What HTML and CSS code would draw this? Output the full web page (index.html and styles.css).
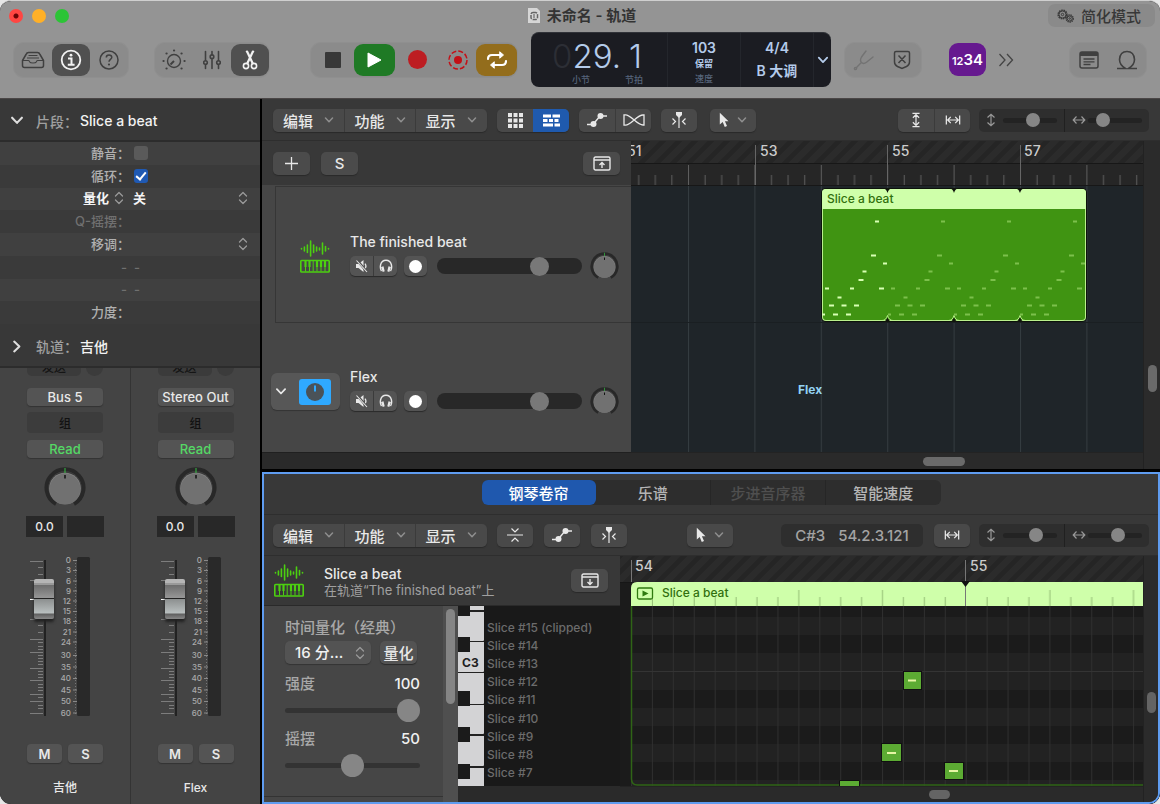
FILE: index.html
```html
<!DOCTYPE html>
<html lang="zh-CN">
<head>
<meta charset="utf-8">
<title>未命名 - 轨道</title>
<link rel="stylesheet" href="styles.css">
</head>
<body>
<svg class="defs" aria-hidden="true">
  <symbol id="chev" viewBox="0 0 10 6"><path d="M1.500 1l3.500 3.700L8.500 1" fill="none" stroke="currentColor" stroke-width="1.500" stroke-linecap="round" stroke-linejoin="round"/></symbol>
  <symbol id="updown" viewBox="0 0 10 14"><path d="M1.500 5L5 1.500 8.500 5M1.500 9L5 12.500 8.500 9" fill="none" stroke="currentColor" stroke-width="1.300" stroke-linecap="round" stroke-linejoin="round"/></symbol>
  <symbol id="auto" viewBox="0 0 22 16"><path d="M1 12.500h6L14 4h7" fill="none" stroke="currentColor" stroke-width="1.400"/><circle cx="7.500" cy="12" r="3" fill="currentColor"/><circle cx="14.500" cy="4" r="3" fill="currentColor"/></symbol>
  <symbol id="catch" viewBox="0 0 16 16"><path d="M8 3v13M1.500 6.500l3 3-3 3M14.500 6.500l-3 3 3 3" fill="none" stroke="currentColor" stroke-width="1.200"/><path d="M5 0h6v3L8 6 5 3z" fill="currentColor"/></symbol>
  <symbol id="pointer" viewBox="0 0 10 16"><path d="M.8.8v11.800l2.900-2.500 2.100 4.900 2.200-1-2.100-4.700h3.600z" fill="currentColor"/></symbol>
  <symbol id="fitw" viewBox="0 0 18 12"><path d="M1.500 1v10M16.500 1v10M3 6h12M6.500 2.500L3 6l3.500 3.500M11.500 2.500L15 6l-3.500 3.500" fill="none" stroke="currentColor" stroke-width="1.400"/></symbol>
  <symbol id="fith" viewBox="0 0 12 18"><path d="M2 1.500h8M2 16.500h8M6 3v12M2.500 6.500L6 3l3.500 3.500M2.500 11.500L6 15l3.500-3.500" fill="none" stroke="currentColor" stroke-width="1.400"/></symbol>
  <symbol id="vert" viewBox="0 0 10 14"><path d="M5 1.500v11M1.500 4.500L5 1.200l3.500 3.300M1.500 9.500L5 12.800l3.500-3.300" fill="none" stroke="currentColor" stroke-width="1.200"/></symbol>
  <symbol id="horiz" viewBox="0 0 14 10"><path d="M1.500 5h11M4.500 1.500L1.200 5l3.300 3.500M9.500 1.500L12.800 5l-3.300 3.500" fill="none" stroke="currentColor" stroke-width="1.200"/></symbol>
  <symbol id="instr" viewBox="0 0 30 33"><g stroke="#4cd010" stroke-width="1.600" stroke-linecap="round" fill="none"><path d="M1.500 8.500v.5M4.400 7v4M7.400 5v7.500M10.600 1v15M13.600 5v7.500M16.600 7v4M19.500 8v2M22.500 3v11M25.500 6.500v4.500M28.500 8.500v.5"/><rect x=".8" y="20.500" width="28.400" height="11.500" rx=".8"/><path d="M5.500 21v10M9.500 21v10M13.200 21v10M17 21v10M21 21v10M25 21v10" stroke-width="1"/><path d="M5.500 21v6M9.500 21v6M17 21v6M21 21v6M25 21v6" stroke-width="2.200" stroke-linecap="butt"/></g></symbol>
  <symbol id="muted" viewBox="0 0 14 14"><path d="M1 5v4h2.500L8.500 13V1L3.500 5z" fill="currentColor"/><path d="M10 4.500a4 4 0 010 5" fill="none" stroke="currentColor" stroke-width="1.200"/><path d="M2 1l10 12" stroke="#505050" stroke-width="2.500"/><path d="M1.500 1.500l10.500 11.500" stroke="currentColor" stroke-width="1.100"/></symbol>
  <symbol id="phones" viewBox="0 0 14 14"><path d="M2.500 12C.5 9 .8 1.200 7 1.200s6.500 7.800 4.500 10.800" fill="none" stroke="currentColor" stroke-width="1.400"/><path d="M2 8l2.500-.8 1.200 5-2 .8zM12 8l-2.500-.8-1.200 5 2 .8z" fill="currentColor"/></symbol>
  <symbol id="knob" viewBox="0 0 42 42"><path d="M12 37A18.500 18.500 0 1 1 30 37" fill="none" stroke="#282828" stroke-width="4"/><circle cx="21" cy="21" r="16.500" fill="#3a3a3a"/><circle cx="21" cy="21.500" r="15.800" fill="#858585"/><circle cx="21" cy="22" r="15.400" fill="#717171"/><path d="M21 1v5" stroke="#35c042"/><path d="M21 8v3.500" stroke="#111" stroke-width="1.500"/></symbol>
  <symbol id="loopnotes" viewBox="0 0 66 132" overflow="visible"><path d="M53 33.500h4M49 67.500h5M61 75.500h4M40.500 83.500h4M36.500 92h5M3 100.500h4M28 100.500h4M57 100.500h5M15.500 109.500h4M7 117.500h5M19.500 117.500h5M32 117.500h5M0 126.500h3M11 126.500h5M24 126.500h5" stroke="currentColor" stroke-width="2"/></symbol>
</svg>

<div class="window">
  <header class="top">
    <div class="titlebar">
      <div class="lights"><button class="light red" aria-label="关闭"></button><button class="light yellow" aria-label="最小化"></button><button class="light green" aria-label="缩放"></button></div>
      <h1 class="title"><svg width="12" height="15" viewBox="0 0 12 15"><path d="M0 0h9l3 3v12H0z" fill="#d6d6d6"/><rect x="3" y="4.500" width="6.500" height="7" rx="2" fill="none" stroke="#666" stroke-width="1.500" stroke-dasharray="4 1"/><path d="M6 6v4" stroke="#555"/></svg>未命名 - 轨道</h1>
      <button class="simple"><svg width="17" height="14" viewBox="0 0 17 14" fill="none" stroke="#3b3b3b"><circle cx="5.500" cy="5.500" r="4.300" stroke-width="1.600" stroke-dasharray="1.600 .7"/><circle cx="5.500" cy="5.500" r="3.500"/><circle cx="5.500" cy="5.500" r="1.200"/><circle cx="12.700" cy="9.500" r="3.500" stroke-width="1.500" stroke-dasharray="1.400 .7"/><circle cx="12.700" cy="9.500" r="2.500"/><circle cx="12.700" cy="9.500" r=".8"/></svg>简化模式</button>
    </div>
    <div class="maintools">
      <div class="group">
        <button aria-label="资源库"><svg width="24" height="18" viewBox="0 0 24 18" fill="none" stroke="currentColor" stroke-width="1.500" stroke-linejoin="round"><path d="M1.500 9.500L5 3.500Q5.800 1.500 7.500 1.500h9q1.700 0 2.500 2l3.500 6v5q0 2-2 2h-17q-2 0-2-2z"/><path d="M1.500 9.500h6q.8 0 1 1.200.8 1.300 3.500 1.300t3.500-1.300q.2-1.200 1-1.200h6M7.500 4.500h9M6 7h12" stroke-width="1.200"/></svg></button>
        <button class="on" aria-label="检查器"><svg width="22" height="22" viewBox="0 0 22 22" fill="none" stroke="currentColor" stroke-width="1.800"><circle cx="11" cy="11" r="9.300"/><path d="M8 9.500h3.500v6M7.800 15.700h6.800" stroke-width="2"/><circle cx="11" cy="6.200" r="1.400" fill="currentColor" stroke="none"/></svg></button>
        <button aria-label="快速帮助"><svg width="22" height="22" viewBox="0 0 22 22" fill="none" stroke="currentColor" stroke-width="1.500"><circle cx="11" cy="11" r="9"/><path d="M8.300 8.500Q8.300 6 11 6t2.800 2.300c0 2-2.800 2.200-2.800 4.400"/><circle cx="11" cy="15.500" r="1.100" fill="currentColor" stroke="none"/></svg></button>
      </div>
      <div class="group">
        <button aria-label="智能控制"><svg width="24" height="22" viewBox="0 0 24 22" fill="none" stroke="currentColor" stroke-width="1.400"><circle cx="12" cy="12" r="6.500"/><path d="M12 12l-3.500 3.500" stroke-width="2"/><path d="M1.500 12h.1M22.500 12h.1M4.500 4.500h.1M19.500 4.500h.1M12 1.500h.1M4.500 19.500h.1M19.500 19.500h.1" stroke-width="2.200" stroke-linecap="round"/></svg></button>
        <button aria-label="混音器"><svg width="18" height="20" viewBox="0 0 18 20" fill="none" stroke="currentColor" stroke-width="1.600" stroke-linecap="round"><path d="M2.500 1.500v9M2.500 15v3.500M9 1.500v3M9 9v9.500M15.500 1.500v9M15.500 15v3.500"/><circle cx="2.500" cy="12.500" r="1.800"/><circle cx="9" cy="6.700" r="1.800"/><circle cx="15.500" cy="12.500" r="1.800"/></svg></button>
        <button class="on" aria-label="编辑器"><svg width="16" height="20" viewBox="0 0 16 20" fill="none" stroke="currentColor"><circle cx="4" cy="16" r="2.600" stroke-width="1.600"/><circle cx="12" cy="16" r="2.600" stroke-width="1.600"/><path d="M4.200 1l1 .8L11 14M11.800 1l-1 .8L5 14" stroke-width="2.200"/></svg></button>
      </div>
      <div class="group transport">
        <button class="halt" aria-label="停止"><i class="stop"></i></button>
        <button class="play" aria-label="播放"><svg width="15" height="16" viewBox="0 0 15 16"><path d="M1 1l13 7-13 7z" fill="#fff" stroke="#fff" stroke-linejoin="round"/></svg></button>
        <button class="record" aria-label="录音"><i class="rec"></i></button>
        <button class="capture" aria-label="捕捉录音"><svg width="20" height="20" viewBox="0 0 20 20"><circle cx="10" cy="10" r="9" fill="none" stroke="#c40f16" stroke-width="1.500" stroke-dasharray="5 2.070"/><circle cx="10" cy="10" r="4" fill="#c40f16"/></svg></button>
        <button class="cycle" aria-label="循环"><svg width="22" height="18" viewBox="0 0 22 18" fill="none" stroke="#fff" stroke-width="2.200" stroke-linecap="round"><path d="M2 8Q2 4 6 4h8M20 10q0 4-4 4H8"/><path d="M14 1l3.500 3L14 7zM8 11l-3.500 3L8 17z" fill="#fff" stroke-width="1" stroke-linejoin="round"/></svg></button>
      </div>
      <div class="lcd">
        <div class="lcd-pos">
          <div class="digits"><span class="ghost">0</span><span>29.</span><span class="beat">1</span></div>
          <div class="lcd-labels"><span>小节</span><span>节拍</span></div>
        </div>
        <div class="lcd-tempo"><b>103</b><em>保留</em><small>速度</small></div>
        <div class="lcd-key"><b>4/4</b><b>B 大调</b></div>
        <button class="lcd-more" aria-label="显示模式"><svg width="12" height="8"><use href="#chev"/></svg></button>
      </div>
      <div class="group tuner">
        <button class="faint" aria-label="调音器"><svg width="22" height="22" viewBox="0 0 22 22" fill="none" stroke="currentColor" stroke-width="1.400" stroke-linecap="round"><path d="M3.300 18.700L8.300 13.500M13 2L8.500 8Q6.500 11.500 8.500 13.500t5-.3L20 8"/><circle cx="2.500" cy="19.500" r="1.100"/></svg></button>
        <button aria-label="独奏安全"><svg width="18" height="20" viewBox="0 0 18 20" fill="none" stroke="currentColor" stroke-width="1.500"><path d="M3 1.500h12q1.500 0 1.500 1.500v9q0 3-3 4.500L9 18.500l-4.500-2q-3-1.500-3-4.500V3q0-1.500 1.500-1.500zM5.500 5.500l7 7.500M12.500 5.500l-7 7.500"/></svg></button>
      </div>
      <button class="count" aria-label="预备拍"><span class="sm">12</span>34</button>
      <button class="more" aria-label="更多"><svg width="16" height="14" viewBox="0 0 16 14" fill="none" stroke="#444" stroke-width="1.300"><path d="M1.500 1l5.500 6-5.500 6M9 1l5.500 6L9 13"/></svg></button>
      <div class="group right">
        <button aria-label="备忘录"><svg width="20" height="18" viewBox="0 0 20 18" fill="none" stroke="currentColor" stroke-width="1.500"><rect x="1" y="1" width="18" height="16" rx="2"/><path d="M1 3h18" stroke-width="4"/><path d="M4.500 8h11M4.500 10.800h11M4.500 13.500h7" stroke-width="1.300"/></svg></button>
        <button aria-label="循环浏览器"><svg width="22" height="20" viewBox="0 0 22 20" fill="none" stroke="currentColor" stroke-width="1.600"><path d="M1 18.500h8.500Q3.500 15 3.500 9.500 4 1.500 11 1.500t7.500 8Q18.500 15 12.500 18.500H21"/></svg></button>
      </div>
    </div>
  </header>

  <div class="workspace">
    <aside class="inspector">
      <button class="insp-head"><svg width="14" height="9"><use href="#chev"/></svg><span class="k">片段：</span><span>Slice a beat</span></button>
      <div class="params">
        <div class="prow"><label class="pk" for="mute">静音：</label><input type="checkbox" id="mute"></div>
        <div class="prow"><label class="pk" for="loop">循环：</label><input type="checkbox" id="loop" checked></div>
        <div class="prow"><label class="pk strong" for="quant">量化 <svg width="10" height="14"><use href="#updown"/></svg></label><select id="quant"><option>关</option></select><svg class="ud" width="10" height="14"><use href="#updown"/></svg></div>
        <div class="prow off"><span class="pk">Q-摇摆：</span></div>
        <div class="prow"><span class="pk">移调：</span><svg class="ud" width="10" height="14"><use href="#updown"/></svg></div>
        <div class="prow dash"><span class="pk">-</span><span>-</span></div>
        <div class="prow dash"><span class="pk">-</span><span>-</span></div>
        <div class="prow"><span class="pk">力度：</span></div>
      </div>
      <button class="insp-head closed"><svg class="side" width="14" height="9"><use href="#chev"/></svg><span class="k">轨道：</span><span>吉他</span></button>
      <div class="strips">
        <section class="strip">
          <div class="sends"><span>发送</span><i></i></div>
          <button class="slot">Bus 5</button><button class="slot grp">组</button><button class="slot read">Read</button>
          <svg class="pan" width="42" height="42"><use href="#knob"/></svg>
          <div class="vals"><output>0.0</output><output></output></div>
          <div class="fader"><svg width="72" height="160"><g id="scale">
            <path d="M16 3v156" stroke="#222" stroke-width="2"/>
            <g stroke="#7d7d7d" stroke-width="1"><path d="M1 4.500h13M1 23.500h13M1 62.500h13M1 82.500h13M1 95.500h13M1 111.500h13M1 123.500h13M1 137.500h13M1 144.500h13M1 156.500h13"/><path d="M9 10.500h5M9 17.500h5M9 68.500h5M9 75.500h5M9 85.500h5M9 89.500h5M9 92.500h5M9 98.500h5M9 101.500h5M9 104.500h5M9 107.500h5M9 114.500h5M9 117.500h5M9 120.500h5M9 127.500h5M9 130.500h5M9 133.500h5M9 140.500h5M9 148.500h5M9 151.500h5"/></g>
            <path d="M1 42.500h5" stroke="#fff"/>
            <path d="M46.500 3v154" stroke="#777" stroke-dasharray="1 2"/>
            <path d="M44 3.500h4M44 13.500h4M44 24h4M44 34h4M44 44h4M44 54.500h4M44 64.500h4M44 75h4M44 85h4M44 98.500h4M44 110h4M44 121.500h4M44 133h4M44 144.500h4M44 156h4" stroke="#888"/>
            <g class="scale-num"><text x="42" y="6">0</text><text x="42" y="16">3</text><text x="42" y="27">6</text><text x="42" y="37">9</text><text x="42" y="47">12</text><text x="42" y="57">15</text><text x="42" y="67">18</text><text x="42" y="78">21</text><text x="42" y="88">24</text><text x="42" y="101">30</text><text x="42" y="113">35</text><text x="42" y="124">40</text><text x="42" y="136">45</text><text x="42" y="147">50</text><text x="42" y="159">60</text></g>
            <rect x="48" y="0" width="13" height="159" rx="1.500" fill="#292929"/></g></svg><input type="range" aria-label="吉他音量" min="0" max="100" value="82"></div>
          <div class="ms"><button>M</button><button>S</button></div>
          <div class="name">吉他</div>
        </section>
        <section class="strip">
          <div class="sends"><span>发送</span><i></i></div>
          <button class="slot">Stereo Out</button><button class="slot grp">组</button><button class="slot read">Read</button>
          <svg class="pan" width="42" height="42"><use href="#knob"/></svg>
          <div class="vals"><output>0.0</output><output></output></div>
          <div class="fader"><svg width="72" height="160"><use href="#scale"/></svg><input type="range" aria-label="Flex音量" min="0" max="100" value="82"></div>
          <div class="ms"><button>M</button><button>S</button></div>
          <div class="name">Flex</div>
        </section>
      </div>
    </aside>

    <main class="main">
      <section class="arrange">
        <div class="bar">
          <div class="seg menus"><button>编辑<svg width="10" height="6"><use href="#chev"/></svg></button><button>功能<svg width="10" height="6"><use href="#chev"/></svg></button><button>显示<svg width="10" height="6"><use href="#chev"/></svg></button></div>
          <div class="seg"><button aria-label="实时循环网格"><svg width="15" height="15" viewBox="0 0 15 15" fill="currentColor"><path d="M0 0h4v4H0zM5.500 0h4v4h-4zM11 0h4v4h-4zM0 5.500h4v4H0zM5.500 5.500h4v4h-4zM11 5.500h4v4h-4zM0 11h4v4H0zM5.500 11h4v4h-4zM11 11h4v4h-4z"/></svg></button><button class="blue" aria-label="轨道视图"><svg width="17" height="13" viewBox="0 0 17 13" fill="none" stroke="currentColor" stroke-width="3"><path d="M0 2h8M9.500 2H17M0 6.500h4.500M6 6.500h4M11.500 6.500h4M0 11h10M11.500 11H17"/></svg></button></div>
          <div class="seg"><button aria-label="自动化"><svg width="22" height="16"><use href="#auto"/></svg></button><button aria-label="弹性"><svg width="22" height="12" viewBox="0 0 22 12" fill="none" stroke="currentColor" stroke-width="1.300"><path d="M1 .8h1.500C8 .8 14 11 20 11h1V1h-1C14 1 8 11.200 2.500 11.200H1z"/></svg></button></div>
          <div class="seg"><button aria-label="跟随"><svg width="16" height="16"><use href="#catch"/></svg></button></div>
          <div class="seg wide"><button aria-label="指针工具"><svg width="10" height="16"><use href="#pointer"/></svg><svg class="dim" width="10" height="6"><use href="#chev"/></svg></button></div>
          <div class="bar-right">
            <div class="seg"><button aria-label="适合高度"><svg width="12" height="16"><use href="#fith"/></svg></button><button aria-label="适合宽度"><svg width="16" height="12"><use href="#fitw"/></svg></button></div>
            <div class="zoom"><label><svg width="10" height="14"><use href="#vert"/></svg><input type="range" aria-label="垂直缩放" value="58"></label><label><svg width="14" height="10"><use href="#horiz"/></svg><input type="range" aria-label="水平缩放" value="20"></label></div>
          </div>
        </div>
        <div class="arr-body">
          <div class="heads">
            <div class="heads-top"><button class="btn" aria-label="添加轨道"><svg width="13" height="13" viewBox="0 0 13 13"><path d="M6.500 0v13M0 6.500h13" stroke="currentColor" stroke-width="1.300"/></svg></button><button class="btn">S</button><button class="btn end" aria-label="全局轨道"><svg width="18" height="15" viewBox="0 0 18 15" fill="none" stroke="currentColor" stroke-width="1.400"><rect x="1" y="1" width="16" height="13" rx="1.500"/><path d="M1 4h16M9 12V7M6.500 9L9 6.500 11.500 9"/></svg></button></div>
            <div class="track first">
              <div class="ticon"><svg width="30" height="33"><use href="#instr"/></svg></div>
              <div class="tinfo"><div class="tname">The finished beat</div>
                <div class="tctl"><div class="seg mini"><button aria-label="静音"><svg width="14" height="14"><use href="#muted"/></svg></button><button aria-label="独奏"><svg width="14" height="14"><use href="#phones"/></svg></button></div><div class="seg mini"><button aria-label="录音启用"><i class="dot"></i></button></div><input class="vol" type="range" aria-label="音量" value="74"><svg class="tknob" width="29" height="29"><use href="#knob"/></svg></div></div>
            </div>
            <div class="track second">
              <div class="ticon"><button class="tbox" aria-label="展开"><svg width="12" height="7"><use href="#chev"/></svg><svg width="32" height="26" viewBox="0 0 32 26"><rect width="32" height="26" rx="3" fill="#2fa9ff"/><circle cx="16" cy="13" r="9" fill="#4a5258"/><path d="M16 6.500v6" stroke="#2fa9ff" stroke-width="2"/></svg></button></div>
              <div class="tinfo"><div class="tname">Flex</div>
                <div class="tctl"><div class="seg mini"><button aria-label="静音"><svg width="14" height="14"><use href="#muted"/></svg></button><button aria-label="独奏"><svg width="14" height="14"><use href="#phones"/></svg></button></div><div class="seg mini"><button aria-label="录音启用"><i class="dot"></i></button></div><input class="vol" type="range" aria-label="音量" value="74"><svg class="tknob" width="29" height="29"><use href="#knob"/></svg></div></div>
            </div>
            <div class="heads-foot"></div>
          </div>
          <div class="timeline">
            <svg class="canvas" width="100%" height="311">
              <defs>
                <pattern id="hatch" width="16" height="16" patternUnits="userSpaceOnUse"><rect width="16" height="16" fill="#2b2b2b"/><path d="M-4 4L4-4M-4 20L20-4M12 20L20 12" stroke="#252525" stroke-width="5"/></pattern>
                <pattern id="beats" x="57" width="66.400" height="44" patternUnits="userSpaceOnUse"><path d="M.5 24v20M17.100 34v10M33.700 34v10M50.300 34v10" stroke="#5e5e5e"/></pattern>
                <pattern id="barlines" x="57" width="66.400" height="300" patternUnits="userSpaceOnUse"><path d="M.5 0v300" stroke="#343c40"/></pattern>
              </defs>
              <rect width="100%" height="311" fill="#1f2529"/>
              <rect y="44" width="100%" height="267" fill="url(#barlines)"/>
              <path d="M0 181.500h2000" stroke="#1a1f22"/>
              <rect width="100%" height="44" fill="#262626"/>
              <rect width="100%" height="22" fill="url(#hatch)"/>
              <path d="M0 22.500h2000M0 44.500h2000" stroke="#171717"/>
              <rect width="100%" height="44" fill="url(#beats)"/>
              <path d="M124.500 4v40M256.500 4v40M389.500 4v40" stroke="#666"/>
              <g class="rnum"><text x="-4" y="15">51</text><text x="129" y="15">53</text><text x="261" y="15">55</text><text x="393" y="15">57</text></g>
              <g transform="translate(190 47)">
                <rect x="0" y="0" width="266" height="134" rx="5" fill="#0c120a"/>
                <rect x="1" y="1" width="264" height="132" rx="4" fill="#b9f08c"/>
                <path d="M2 21h262v108q0 3-3 3H5q-3 0-3-3z" fill="#409412"/>
                <path d="M1 21V5q0-4 4-4h256q4 0 4 4v16z" fill="#cfffaa"/>
                <g fill="#10150c"><path d="M62 0h9q-3.500 1-4.500 5-1-4-4.500-5zM128.500 0h9q-3.500 1-4.500 5-1-4-4.500-5zM194.500 0h9q-3.500 1-4.500 5-1-4-4.500-5zM62 134h9q-3.500-1-4.500-5-1 4-4.500 5zM128.500 134h9q-3.500-1-4.500-5-1 4-4.500 5zM194.500 134h9q-3.500-1-4.500-5-1 4-4.500 5z"/></g>
                <path d="M61 132.500q4 0 5.500-5 1.500 5 5.500 5M127.500 132.500q4 0 5.500-5 1.500 5 5.500 5M193.500 132.500q4 0 5.500-5 1.500 5 5.500 5" fill="none" stroke="#b9f08c"/>
                <text class="rname" x="6" y="15">Slice a beat</text>
                <use class="n1" href="#loopnotes" x="1" width="66" height="132"/>
                <g class="n2"><use href="#loopnotes" x="67" width="66" height="132"/><use href="#loopnotes" x="133" width="66" height="132"/><use href="#loopnotes" x="199" width="66" height="132"/></g>
              </g>
              <text class="flexlabel" x="167" y="253">Flex</text>
            </svg>
            <div class="hscroll"><i class="thumb-h"></i></div>
          </div>
          <div class="vscroll"><i class="thumb-v"></i></div>
        </div>
      </section>

      <section class="editor">
        <div class="tabsrow"><div class="tabs"><button class="sel">钢琴卷帘</button><button>乐谱</button><button class="sep" disabled>步进音序器</button><button class="sep">智能速度</button></div></div>
        <div class="bar">
          <div class="seg menus"><button>编辑<svg width="10" height="6"><use href="#chev"/></svg></button><button>功能<svg width="10" height="6"><use href="#chev"/></svg></button><button>显示<svg width="10" height="6"><use href="#chev"/></svg></button></div>
          <div class="seg"><button aria-label="折叠模式"><svg width="16" height="16" viewBox="0 0 16 16" fill="none" stroke="currentColor" stroke-width="1.200"><path d="M0 8h16M4.500 1.500L8 5l3.500-3.500M4.500 14.500L8 11l3.500 3.500"/></svg></button></div>
          <div class="seg"><button aria-label="自动化"><svg width="22" height="16"><use href="#auto"/></svg></button></div>
          <div class="seg"><button aria-label="跟随"><svg width="16" height="16"><use href="#catch"/></svg></button></div>
          <div class="seg wide tool"><button aria-label="指针工具"><svg width="10" height="16"><use href="#pointer"/></svg><svg class="dim" width="10" height="6"><use href="#chev"/></svg></button></div>
          <div class="bar-right">
            <output class="info"><span>C#3</span><span>54.2.3.121</span></output>
            <div class="seg"><button aria-label="适合宽度"><svg width="16" height="12"><use href="#fitw"/></svg></button></div>
            <div class="zoom"><label><svg width="10" height="14"><use href="#vert"/></svg><input type="range" aria-label="垂直缩放" value="66"></label><label><svg width="14" height="10"><use href="#horiz"/></svg><input type="range" aria-label="水平缩放" value="58"></label></div>
          </div>
        </div>
        <div class="ed-body">
          <div class="ed-left">
            <div class="ed-head"><svg width="30" height="33"><use href="#instr"/></svg><div class="ed-title"><div>Slice a beat</div><small>在轨道“The finished beat”上</small></div><button class="btn" aria-label="显示片段"><svg width="18" height="15" viewBox="0 0 18 15" fill="none" stroke="currentColor" stroke-width="1.400"><rect x="1" y="1" width="16" height="13" rx="1.500"/><path d="M1 4h16M9 6v5M6.500 9L9 11.500 11.500 9"/></svg></button></div>
            <div class="ed-cols">
              <div class="quant">
                <label class="qk" for="q16">时间量化（经典）</label>
                <div class="qrow"><span class="selwrap"><select id="q16"><option>16 分...</option></select><svg width="10" height="14"><use href="#updown"/></svg></span><button class="btn">量化</button></div>
                <div class="qlab"><label for="str">强度</label><b>100</b></div><input class="big" id="str" type="range" value="100">
                <div class="qlab"><label for="swg">摇摆</label><b>50</b></div><input class="big" id="swg" type="range" value="50">
                <hr>
              </div>
              <div class="qscroll"><i></i></div>
              <div class="keys">
                <svg class="piano" width="26" height="180" viewBox="0 0 26 180"><rect width="26" height="180" fill="#222"/><g fill="#d3d3d5"><path d="M0 0h26v4H0zM0 6h26v28q0 1-1 1H0zM0 36h26v29q0 1-1 1H0zM0 67h26v30q0 1-1 1H0zM0 99h26v28q0 1-1 1H0zM0 130h26v29q0 1-1 1H0zM0 162h26v18H0z"/></g><g fill="#1b1b1b"><path d="M0 0h12v10H0zM0 31h12v15H0zM0 85h12v15H0zM0 121h12v15H0zM0 158h12v15H0z"/></g><text x="4" y="61" class="c3">C3</text></svg>
                <ul class="slices"><li>Slice #15 (clipped)</li><li>Slice #14</li><li>Slice #13</li><li>Slice #12</li><li>Slice #11</li><li>Slice #10</li><li>Slice #9</li><li>Slice #8</li><li>Slice #7</li></ul>
                <div class="keysfoot"></div>
              </div>
            </div>
          </div>
          <div class="roll">
            <svg class="canvas" width="100%" height="230">
              <defs>
                <pattern id="sixteen" x="11" width="334.700" height="24" y="26" patternUnits="userSpaceOnUse"><path d="M21.400 15v9M42.300 15v9M63.200 15v9M84.200 8v16M105.100 15v9M126 15v9M146.900 15v9M167.800 8v16M188.800 15v9M209.700 15v9M230.600 15v9M251.500 8v16M272.400 15v9M293.400 15v9M314.300 15v9" stroke="#93bd74"/></pattern>
                <pattern id="rollgrid" x="11" width="20.920" height="300" patternUnits="userSpaceOnUse"><path d="M.5 0v300" stroke="#2f2f2f"/></pattern>
              </defs>
              <rect width="100%" height="230" fill="#1b1b1b"/>
              <g fill="#222"><rect y="61" width="100%" height="18"/><rect y="97" width="100%" height="37"/><rect y="152" width="100%" height="18"/><rect y="188" width="100%" height="18"/><rect y="224" width="100%" height="6"/></g>
              <rect y="50" width="100%" height="180" fill="url(#rollgrid)"/>
              <path d="M0 115.500h2000" stroke="#343434"/>
              <rect width="100%" height="26" fill="url(#hatch)"/>
              <rect y="26" width="11" height="204" fill="#1b1b1b"/>
              <path d="M0 26.500h2000" stroke="#161616"/>
              <path d="M11 50V32q0-6 6-6h2000v24z" fill="#cfffaa"/>
              <rect x="11" y="26" width="100%" height="24" fill="url(#sixteen)"/>
              <rect x="40" y="28" width="76" height="13" fill="#cfffaa"/>
              <path d="M11.500 4v22M345.500 4v46" stroke="#777"/><path d="M341 25h9l-4.500 6z" fill="#111"/>
              <path d="M11.500 50v173q0 6 6 6h2000" fill="none" stroke="#2f6416" stroke-width="1.500"/>
              <g class="rnum"><text x="15" y="15">54</text><text x="350" y="15">55</text></g>
              <rect x="17.500" y="32" width="15" height="11" rx="1.500" fill="none" stroke="#2f7a10" stroke-width="1.300"/><path d="M22.500 34.500l6 3-6 3z" fill="#2f7a10"/>
              <text class="rname" x="42" y="41">Slice a beat</text>
              <g fill="#5cab33" stroke="#101010"><rect x="283.500" y="115.500" width="18" height="18"/><rect x="261.500" y="187.500" width="20" height="18"/><rect x="324.500" y="206.500" width="19" height="17"/><path d="M219.500 230v-5.500h20v5.500"/></g>
              <path d="M288 124.500h8M267 197h9M329 215h9" stroke="#e6f5a4" stroke-width="2"/>
            </svg>
            <div class="hscroll"><i class="thumb-h"></i></div>
          </div>
          <div class="vscroll"><i class="thumb-v"></i></div>
        </div>
      </section>
    </main>
  </div>
</div>
</body>
</html>
```

FILE: styles.css
```css
* { box-sizing: border-box; }
body { margin: 0; background: #e6e6e6; font: 500 14px "Inter", "Noto Sans CJK SC", sans-serif; color: #e8e8e8; }
.defs { position: absolute; width: 0; height: 0; }
button, select, input, output { font: inherit; color: inherit; margin: 0; }
button { border: 0; padding: 0; background: none; display: flex; align-items: center; justify-content: center; white-space: nowrap; }
svg { display: block; flex: none; }
i { display: block; font-style: normal; }
input[type=range] { appearance: none; background: none; height: 16px; min-width: 0; }

.window { min-height: 100vh; display: flex; flex-direction: column; border-radius: 11px; overflow: hidden; border-top: 1px solid #cfcfcf; background: #000; }

.top { background: #949494; height: 98px; border-bottom: 1px solid #4a4646; flex: none; }
.titlebar { height: 31px; display: grid; grid-template-columns: 1fr auto 1fr; align-items: center; padding: 0 5px 2px 9px; }
.lights { display: flex; gap: 9px; }
.light { width: 14px; height: 14px; border-radius: 50%; }
.light.red { background: radial-gradient(circle, #6a0505 2px, #ff4642 3px); }
.light.yellow { background: #ffb027; }
.light.green { background: #2cc436; }
.title { margin: 0; font-size: 15px; line-height: 22px; font-weight: 600; color: #333; display: flex; align-items: center; gap: 7px; }
.simple { justify-self: end; height: 23px; padding: 0 14px 0 9px; gap: 7px; border-radius: 7px; background: #8a8a8a; color: #383838; font-size: 15px; }
.maintools { height: 55px; display: flex; align-items: center; padding: 0 14px; }
.group { display: flex; height: 34px; padding: 1px 0; border-radius: 10px; background: #8b8b8b; box-shadow: 0 0 0 1px #8f8f8f; color: #404040; }
.group button { width: 38px; border-radius: 9px; }
.group .on { background: #505050; color: #f2f2f2; }
.group + .group { margin-left: 27px; }
.group + .transport { margin-left: 42px; }
.transport .halt { width: 43px; }
.transport .record { width: 44px; }
.transport .capture { width: 37px; }
.transport .play { width: 41px; background: #1f7a25; }
.transport .cycle { width: 41px; background: #936d1c; }
.stop { width: 16px; height: 16px; border-radius: 1px; background: #383838; }
.rec { width: 19px; height: 19px; border-radius: 50%; background: #bd1d22; }
.lcd { width: 300px; height: 55px; margin-left: 14px; display: flex; border-radius: 8px; background: #1b1c22; color: #b4cbea; border-top: 1px solid #303238; }
.lcd-pos { width: 136px; padding-left: 21px; }
.digits { display: flex; font-size: 33px; font-weight: 300; line-height: 39px; margin-top: 4px; }
.ghost { color: #2c2e35; }
.beat { margin-left: 8px; }
.lcd-labels { display: flex; gap: 35px; padding-left: 20px; font-size: 9px; line-height: 8px; color: #56647a; }
.lcd-tempo, .lcd-key { width: 73px; border-left: 1px solid #24262c; display: flex; flex-direction: column; align-items: center; }
.lcd-tempo b, .lcd-key b { font-size: 14px; line-height: 16px; font-weight: 600; margin-top: 7px; }
.lcd-tempo em { font-style: normal; font-size: 9px; line-height: 14px; font-weight: 700; margin-top: 1px; }
.lcd-tempo small { font-size: 9px; line-height: 16px; color: #56647a; }
.lcd-key b + b { margin-top: 7px; }
.lcd-more { flex: 1; border-left: 1px solid #24262c; }
.tuner { margin-left: 14px; }
.tuner .faint { color: #737373; }
.count { width: 37px; height: 33px; margin-left: 28px; border-radius: 9px; background: #66198f; color: #fff; font-size: 15px; font-weight: 600; }
.sm { font-size: 11px; padding-top: 2px; }
.more { margin-left: 12px; }
.group.right { margin-left: auto; }

.workspace { flex: 1; display: grid; grid-template-columns: 260px minmax(0, 1fr); column-gap: 2px; }

.inspector { background: #444; display: flex; flex-direction: column; }
.insp-head { height: 43px; justify-content: flex-start; background: #383838; border-bottom: 2px solid #2c2c2c; padding: 2px 0 0 10px; font-size: 14px; color: #f2f2f2; flex: none; }
.insp-head.closed { height: 44px; }
.insp-head svg { margin-right: 12px; color: #ddd; }
.insp-head .side { transform: rotate(-90deg); }
.k { color: #a0a0a0; margin-right: 2px; }
.params { height: 182px; display: grid; grid-template-rows: repeat(8, 1fr); font-size: 13px; line-height: 18px; }
.prow { display: flex; align-items: center; background: #404040; color: #b0b0b0; padding: 0 12px 1px 0; }
.prow:nth-child(even) { background: #3a3a3a; }
.pk { width: 130px; text-align: right; margin-right: 4px; }
.pk.strong { display: flex; justify-content: flex-end; align-items: center; gap: 5px; width: 124px; margin-right: 9px; color: #f4f4f4; font-weight: 600; }
.strong svg, .ud { color: #9a9a9a; }
.ud { margin-left: auto; }
.prow.off, .prow.dash { color: #707070; }
.dash .pk { width: 127px; margin-right: 7px; }
.prow select { appearance: none; border: 0; background: none; padding: 0; color: #f4f4f4; font-weight: 600; flex: 1; }
.prow input { appearance: none; width: 14px; height: 14px; border-radius: 3px; background: #5a5a5a; }
.prow input:checked { background: #1f59b3; display: grid; place-items: center; }
.prow input:checked::after { content: ""; width: 4px; height: 8px; border: solid #fff; border-width: 0 2px 2px 0; transform: rotate(40deg); margin-bottom: 2px; }

.strips { flex: 1; display: grid; grid-template-columns: 131px 1fr; }
.strip { display: flex; flex-direction: column; align-items: center; font-size: 13px; border-right: 1px solid #343434; }
.strip:last-child { border: 0; }
.sends { height: 8px; width: 76px; display: flex; gap: 5px; overflow: hidden; align-items: flex-end; color: #151515; line-height: 16px; font-size: 12px; }
.sends span { width: 54px; height: 16px; text-align: center; background: #3b3b3b; border-radius: 5px; }
.sends i { width: 17px; height: 17px; border-radius: 50%; background: #3b3b3b; }
.slot { width: 76px; height: 18px; border-radius: 4px; background: #545454; box-shadow: 0 1px 1px #333; margin-top: 12px; }
.grp { height: 21px; margin-top: 6px; background: #3c3c3c; box-shadow: none; color: #111; font-size: 12px; }
.read { margin-top: 7px; color: #55d865; }
.pan { margin-top: 9px; }
.vals { display: flex; gap: 4px; margin-top: 7px; }
.vals output { width: 37px; height: 21px; background: #282828; text-align: center; line-height: 21px; font-size: 12px; }
.fader { position: relative; margin-top: 20px; }
.fader input { position: absolute; left: 5px; top: 0; width: 20px; height: 160px; writing-mode: vertical-lr; direction: rtl; }
.fader input::-webkit-slider-thumb { appearance: none; width: 20px; height: 40px; border-radius: 2px; box-shadow: 0 3px 3px #222; background: linear-gradient(#b5b5b5 0 4px, #999 4px 6px, #6c6c6c 6px, #979797 19px, #222 19px 20px, #8c8f8f 20px, #b9bfbf 34px, #5f5f5f 35px, #888); }
.scale-num { font-size: 8px; fill: #aaa; text-anchor: end; }
.ms { display: flex; gap: 6px; margin-top: 27px; }
.ms button { width: 35px; height: 19px; border-radius: 4px; background: #545454; box-shadow: 0 1px 1px #333; font-size: 13px; font-weight: 600; }
.name { margin-top: 16px; line-height: 18px; font-size: 12px; }

.main { display: flex; flex-direction: column; min-width: 0; background: #000; }
.bar { height: 42px; display: flex; align-items: center; gap: 10px; padding: 1px 11px 0; background: #383838; border-bottom: 1px solid #2e2e2e; }
.seg { display: flex; height: 23px; border-radius: 5px; background: #494949; box-shadow: 0 1px 1px #2a2a2a; overflow: hidden; }
.seg button { width: 36px; }
.seg button + button { border-left: 1px solid #3b3b3b; }
.seg .blue { background: #1f5aae; border: 0; color: #fff; }
.menus { padding-right: 1px; font-size: 15px; }
.seg.menus button { width: 71px; gap: 11px; }
.menus svg, .dim { color: #8e8e8e; }
.seg.wide button { width: 46px; gap: 8px; }
.wide { margin-left: 3px; }
.bar-right { margin-left: auto; display: flex; gap: 9px; align-items: center; }
.zoom { display: flex; height: 23px; border-radius: 5px; background: #2e2e2e; color: #999; }
.zoom label { width: 85px; display: flex; align-items: center; justify-content: space-between; padding: 0 7px; }
.zoom label + label { border-left: 1px solid #202020; }
.zoom input { width: 54px; }
.zoom input::-webkit-slider-runnable-track { height: 5px; border-radius: 3px; background: #232323; }
.zoom input::-webkit-slider-thumb { appearance: none; width: 14px; height: 14px; border-radius: 50%; background: #868686; margin-top: -5px; }

.arrange { height: 370px; display: flex; flex-direction: column; }
.arr-body { flex: 1; display: grid; grid-template-columns: 369px minmax(0, 1fr) 17px; }
.heads { background: #464646; display: flex; flex-direction: column; }
.heads-top { height: 44px; display: flex; align-items: center; gap: 11px; padding: 0 11px; background: #383838; }
.btn { height: 23px; width: 37px; border-radius: 5px; background: #4b4b4b; box-shadow: 0 1px 1px #2a2a2a; font-size: 15px; }
.end { margin-left: auto; }
.track { display: flex; align-items: center; gap: 10px; padding: 0 0 0 9px; }
.track.first { height: 137px; margin-left: 13px; margin-top: 1px; padding: 4px 0 0; border: solid #363636; border-width: 1px 0 1px 1px; gap: 6px; }
.track.second { height: 129px; padding-top: 8px; }
.ticon { width: 69px; display: flex; justify-content: center; }
.first .ticon { width: 68px; padding-left: 10px; }
.tbox { width: 69px; height: 37px; border-radius: 6px; background: #575757; box-shadow: 0 1px 1px #333; gap: 12px; padding-right: 6px; }
.tname { font-size: 14px; line-height: 18px; margin-bottom: 1px; }
.tctl { display: flex; align-items: center; }
.mini { height: 20px; background: #545454; margin-right: 7px; }
.mini button { width: 23px; }
.mini button + button { width: 24px; }
.dot { width: 13px; height: 13px; border-radius: 50%; background: #fff; }
.vol { width: 145px; height: 20px; border-radius: 10px; }
.mini + .vol { margin-left: 3px; background: #282828; }
.vol::-webkit-slider-thumb { appearance: none; width: 19px; height: 19px; border-radius: 50%; background: #787878; }
.tknob { margin-left: 8px; }
.heads-foot { flex: 1; background: #2a2a2a; border-top: 1px solid #202020; }
.timeline, .roll { min-width: 0; overflow: hidden; display: flex; flex-direction: column; }
.hscroll { flex: 1; background: #2a2a2a; display: flex; align-items: center; border-top: 1px solid #232323; }
.timeline .thumb-h { width: 42px; height: 9px; border-radius: 5px; background: #6a6a6a; margin-left: 57%; }
.vscroll { background: #2b2b2b; border-left: 1px solid #222; display: flex; flex-direction: column; align-items: center; }
.arr-body .thumb-v { width: 9px; height: 27px; border-radius: 5px; background: #6a6a6a; margin-top: 224px; }
.rnum { font-size: 14px; fill: #ccc; }
.rname { font-size: 12px; fill: #32700f; }
.n1 { color: #d8ffb4; }
.n2 { color: #7cc04c; }
.flexlabel { font-size: 12px; font-weight: 700; fill: #93d2f2; }

.editor { flex: 1; margin-top: 3px; border: 2px solid #5f9cf0; border-radius: 0 0 11px 0; background: #383838; display: flex; flex-direction: column; overflow: hidden; }
.tabsrow { height: 41px; display: flex; justify-content: center; align-items: center; border-bottom: 1px solid #2e2e2e; padding-bottom: 4px; }
.tabs { display: flex; width: 459px; height: 25px; border-radius: 6px; background: #2d2d2d; }
.tabs button { flex: 1; color: #b5b5b5; font-size: 15px; }
.tabs .sel { background: #1f58ae; color: #fff; border-radius: 6px; }
.tabs .sep { border-left: 1px solid #262626; }
.tabs button:disabled { color: #4f4f4f; }
.editor .bar { height: 41px; padding: 0 9px; background: none; gap: 11px; }
.editor .menus { margin-right: -1px; }
.tool { margin-left: 49px; }
.info { display: flex; gap: 13px; width: 142px; height: 23px; line-height: 23px; justify-content: center; border-radius: 5px; background: #2e2e2e; color: #a3a3a3; margin-right: 2px; font-size: 15px; }
.ed-body { flex: 1; display: grid; grid-template-columns: 356px minmax(0, 1fr) 15px; }
.ed-left { display: flex; flex-direction: column; }
.ed-head { height: 50px; display: flex; align-items: center; padding: 0 12px 0 10px; border-bottom: 1px solid #2a2a2a; }
.ed-title { margin: 0 auto 0 20px; line-height: 17px; padding-top: 2px; }
.ed-title small { display: block; font-size: 13px; line-height: 16px; color: #a0a0a0; font-weight: 400; white-space: nowrap; }
.ed-cols { flex: 1; display: grid; grid-template-columns: 179px 15px 1fr; }
.quant { background: #464646; padding: 12px 0 0 21px; font-size: 15px; }
.quant > * { margin-right: 23px; }
.qk { display: block; line-height: 20px; color: #a8a8a8; white-space: nowrap; }
.qrow { display: flex; gap: 9px; margin-top: 3px; margin-bottom: 9px; }
.selwrap { display: flex; align-items: center; width: 86px; height: 23px; border-radius: 5px; background: #535353; box-shadow: 0 1px 1px #333; padding: 0 6px 0 10px; color: #999; }
.selwrap select { appearance: none; border: 0; background: none; color: #f0f0f0; flex: 1; min-width: 0; padding: 0; }
.qrow .btn { background: #535353; }
.qlab { display: flex; justify-content: space-between; line-height: 22px; color: #a8a8a8; }
.qlab b { font-weight: 500; color: #f0f0f0; }
.quant .big { display: block; width: 135px; height: 24px; margin: 3px 0 6px; }
.big::-webkit-slider-runnable-track { height: 5px; border-radius: 3px; background: #333; }
.big::-webkit-slider-thumb { appearance: none; width: 23px; height: 23px; border-radius: 50%; background: #868686; margin-top: -9px; }
.quant hr { border: 0; border-top: 1px solid #333; margin: 19px 0 0 -21px; }
.qscroll { background: #4f4f4f; padding: 3px 0 0 3px; }
.qscroll i { width: 9px; height: 95px; border-radius: 5px; background: #858585; }
.keys { display: grid; grid-template: 180px 1fr / 26px 1fr; background: #191919; }
.c3 { font-size: 12px; font-weight: 700; fill: #222; }
.slices { list-style: none; margin: 0; padding: 13px 0 4px 3px; font-size: 12px; color: #6c6c6c; display: grid; grid-auto-rows: 1fr; line-height: 18px; }
.keysfoot { grid-column: 1 / 3; background: #2a2a2a; }
.roll .thumb-h { width: 21px; height: 9px; border-radius: 5px; background: #646464; margin-left: 59%; }
.ed-body .thumb-v { width: 9px; height: 21px; border-radius: 5px; background: #646464; margin-top: 136px; }
```
